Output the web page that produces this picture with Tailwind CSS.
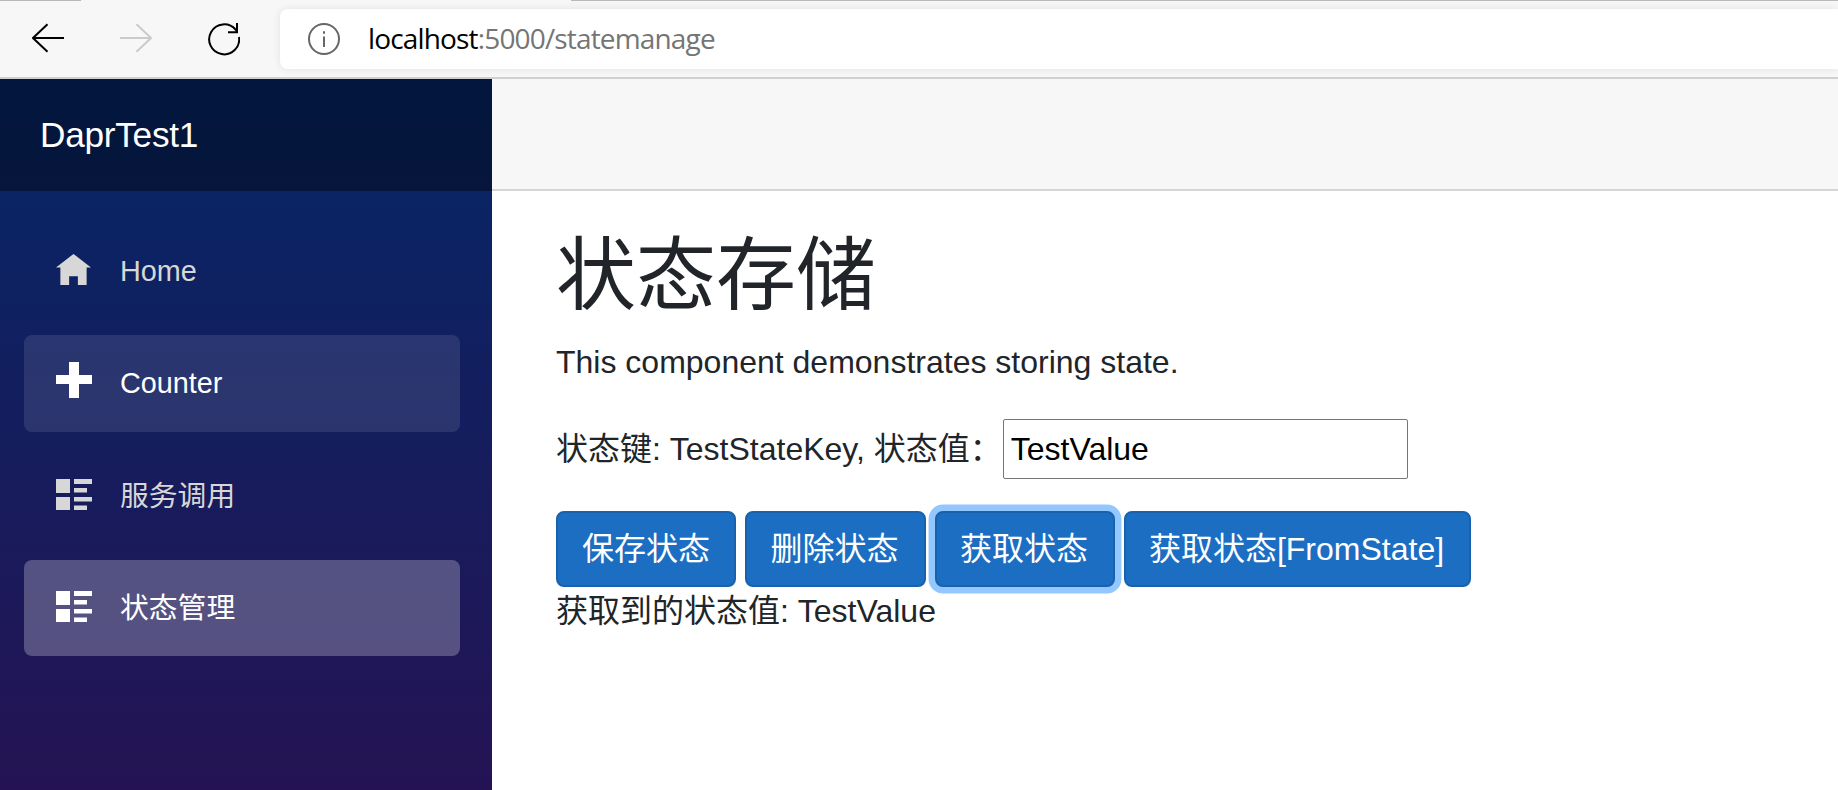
<!DOCTYPE html>
<html lang="zh-CN">
<head>
<meta charset="utf-8">
<title>DaprTest1</title>
<script src="https://cdn.jsdelivr.net/npm/@tailwindcss/browser@4"></script>
</head>
<body class="flex h-[790px] flex-col overflow-hidden bg-white font-['Liberation_Sans','Noto_Sans_CJK_SC',sans-serif] text-[32px] leading-[48px] text-[#212529]">
  <header class="relative flex h-[79px] shrink-0 items-start border-b-2 border-[#d0d0d0] bg-[#f7f7f7] pt-[9px]">
    <div class="absolute top-0 left-0 h-px w-[81px] bg-[#b8b8b8]"></div>
    <div class="absolute top-0 right-0 left-[571px] h-px bg-[#b8b8b8]"></div>
    <svg class="mt-[13px] ml-8 h-8 w-8" viewBox="0 0 32 32" fill="none" stroke="#000" stroke-width="2"><path d="M32 16H1M15.5 2.3L1 16l14.500 13.700"/></svg>
    <svg class="mt-[13px] ml-14 h-8 w-8" viewBox="0 0 32 32" fill="none" stroke="#cbcbcb" stroke-width="2"><path d="M0 16h31M16.500 2.300L31 16 16.500 29.700"/></svg>
    <svg class="mt-[13px] ml-14 h-9 w-8" viewBox="0 0 32 36" fill="none" stroke="#000" stroke-width="2"><path d="M31 15A15 15 0 1 1 27.500 7.500L29 9.500M29 1v9.200h-9"/></svg>
    <div class="ml-10 flex h-[60px] flex-1 items-center rounded-l-lg bg-white pl-7 shadow-[0_0_8px_rgba(0,0,0,0.09)]">
      <svg class="h-8 w-8" viewBox="0 0 32 32" fill="none" stroke="#666" stroke-width="2"><circle cx="16" cy="16" r="15"/><path d="M16 13.500V24M16 8.200v2.600" /></svg>
      <div class="-mt-0.5 ml-[28px] font-['Open_Sans',sans-serif] text-[28px] leading-9 tracking-[-0.84px] whitespace-nowrap text-[#757575]"><span class="text-black">localhost</span>:5000/statemanage</div>
    </div>
  </header>
  <div class="flex min-h-0 flex-1">
    <aside class="w-[492px] shrink-0 bg-[linear-gradient(180deg,rgb(5,39,103)_0,#3a0647_1190px)]">
      <div class="flex h-28 items-center bg-black/40 pb-px pl-10 text-[35.2px] tracking-[-0.25px] text-white">DaprTest1</div>
      <nav class="flex flex-col gap-4 pt-8 pr-8 pl-6 text-[28.8px] leading-[96px] text-[#d7d7d7]">
        <a class="flex h-24 rounded-lg pl-8"><svg class="mt-[27px] mr-[29px] h-[35px] w-[35px]" viewBox="0 0 8 8" fill="currentColor"><path d="M4 .9L0 4h1v4h2V6h2v2h2V4h1z"/></svg>Home</a>
        <a class="flex h-[97px] rounded-lg bg-white/10 pl-8 text-white"><svg class="mt-[27px] mr-[28px] h-9 w-9" viewBox="0 0 36 36" fill="currentColor"><path d="M13 0h10v13h13v9H23v14H13V22H0v-9h13z"/></svg>Counter</a>
        <a class="flex h-24 rounded-lg pl-8"><svg class="mt-[31px] mr-[28px] h-[31px] w-9" viewBox="0 0 36 31" fill="currentColor"><path d="M0 0h14v14H0zM18 0h18v5H18zM18 9h13v4.500H18zM0 18h14v13H0zM18 18h18v4.500H18zM18 26.500h13V31H18z"/></svg>服务调用</a>
        <a class="flex h-24 rounded-lg bg-white/25 pl-8 text-white"><svg class="mt-[31px] mr-[28px] h-[31px] w-9" viewBox="0 0 36 31" fill="currentColor"><path d="M0 0h14v14H0zM18 0h18v5H18zM18 9h13v4.500H18zM0 18h14v13H0zM18 18h18v4.500H18zM18 26.500h13V31H18z"/></svg>状态管理</a>
      </nav>
    </aside>
    <div class="min-w-0 flex-1">
      <div class="h-28 border-b-2 border-[#d6d5d5] bg-[#f7f7f7]"></div>
      <main class="pt-[37px] pl-16">
        <h1 class="mb-3.5 text-[80px] leading-[96px] font-normal">状态存储</h1>
        <p class="mb-8">This component demonstrates storing state.</p>
        <div class="mb-8 flex h-[61px] items-center whitespace-nowrap">状态键: TestStateKey, 状态值：<input type="text" value="TestValue" class="ml-px h-[60px] w-[405px] rounded-[2px] border border-[#767676] bg-white px-[7px] pt-0.5 text-black"></div>
        <div class="flex gap-[9px] text-white">
          <button class="h-[76px] w-[180px] rounded-lg border-2 border-[#1861ac] bg-[#1b6ec2]">保存状态</button>
          <button class="h-[76px] w-[181px] rounded-lg border-2 border-[#1861ac] bg-[#1b6ec2] pr-0.5">删除状态</button>
          <button class="h-[76px] w-[180px] rounded-lg border-2 border-[#1861ac] bg-[#1b6ec2] pr-0.5 shadow-[0_0_0_6.400px_#93c7ff]">获取状态</button>
          <button class="h-[76px] w-[347px] rounded-lg border-2 border-[#1861ac] bg-[#1b6ec2] pr-0.5">获取状态[FromState]</button>
        </div>
        <p>获取到的状态值: TestValue</p>
      </main>
    </div>
  </div>
</body>
</html>
